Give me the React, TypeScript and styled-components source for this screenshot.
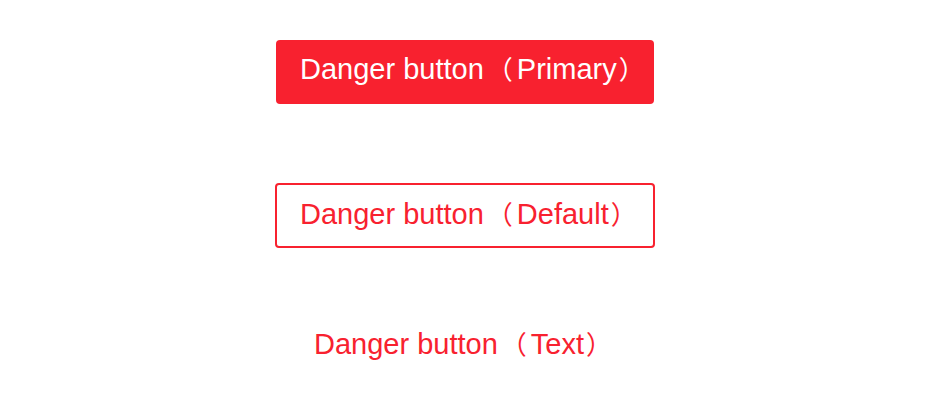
import React from "react";
import styled, { createGlobalStyle, css } from "styled-components";

const Global = createGlobalStyle`
  html, body { margin: 0; padding: 0; background: #ffffff; }
  body { font-family: "Liberation Sans", "Noto Sans CJK SC", sans-serif; }
`;

const DANGER = "#f8212f";

const Page = styled.div`
  width: 928px;
  height: 406px;
  display: flex;
  flex-direction: column;
  align-items: center;
  padding: 40px 0 0 2px;
  box-sizing: border-box;
`;

type Variant = "primary" | "default" | "text";

const Button = styled.button<{ $variant: Variant; $gap: number }>`
  display: flex;
  flex-direction: row;
  align-items: baseline;
  box-sizing: border-box;
  height: 64px;
  margin: ${(p) => p.$gap}px 0 0;
  padding: 15px 24px 0;
  border-radius: 4px;
  font-family: "Liberation Sans", "Noto Sans CJK SC", sans-serif;
  cursor: pointer;
  ${(p) =>
    p.$variant === "primary" &&
    css`
      width: 378px;
      background: ${DANGER};
      color: #ffffff;
      border: none;
    `}
  ${(p) =>
    p.$variant === "default" &&
    css`
      width: 380px;
      height: 65px;
      padding: 15px 23px 0;
      background: #ffffff;
      color: ${DANGER};
      border: 2px solid ${DANGER};
    `}
  ${(p) =>
    p.$variant === "text" &&
    css`
      padding: 15px 0 0;
      margin-right: 4px;
      background: transparent;
      color: ${DANGER};
      border: none;
    `}
`;

const Word = styled.span`
  font-family: "Liberation Sans", sans-serif;
  font-size: 29px;
  line-height: 29px;
  white-space: pre;
`;

const Paren = styled.span<{ $open?: boolean }>`
  font-family: "Noto Sans CJK SC", sans-serif;
  font-size: 26px;
  line-height: 26px;
  text-spacing-trim: space-all;
  margin: ${(p) => (p.$open ? "0 4px 0 3px" : "0 0 0 2px")};
`;

function DangerButton({
  variant,
  label,
  gap,
}: {
  variant: Variant;
  label: string;
  gap: number;
}) {
  return (
    <Button $variant={variant} $gap={gap}>
      <Word>Danger button</Word>
      <Paren $open>（</Paren>
      <Word>{label}</Word>
      <Paren>）</Paren>
    </Button>
  );
}

export default function App() {
  return (
    <>
      <Global />
      <Page>
        <DangerButton variant="primary" label="Primary" gap={0} />
        <DangerButton variant="default" label="Default" gap={79} />
        <DangerButton variant="text" label="Text" gap={67} />
      </Page>
    </>
  );
}
